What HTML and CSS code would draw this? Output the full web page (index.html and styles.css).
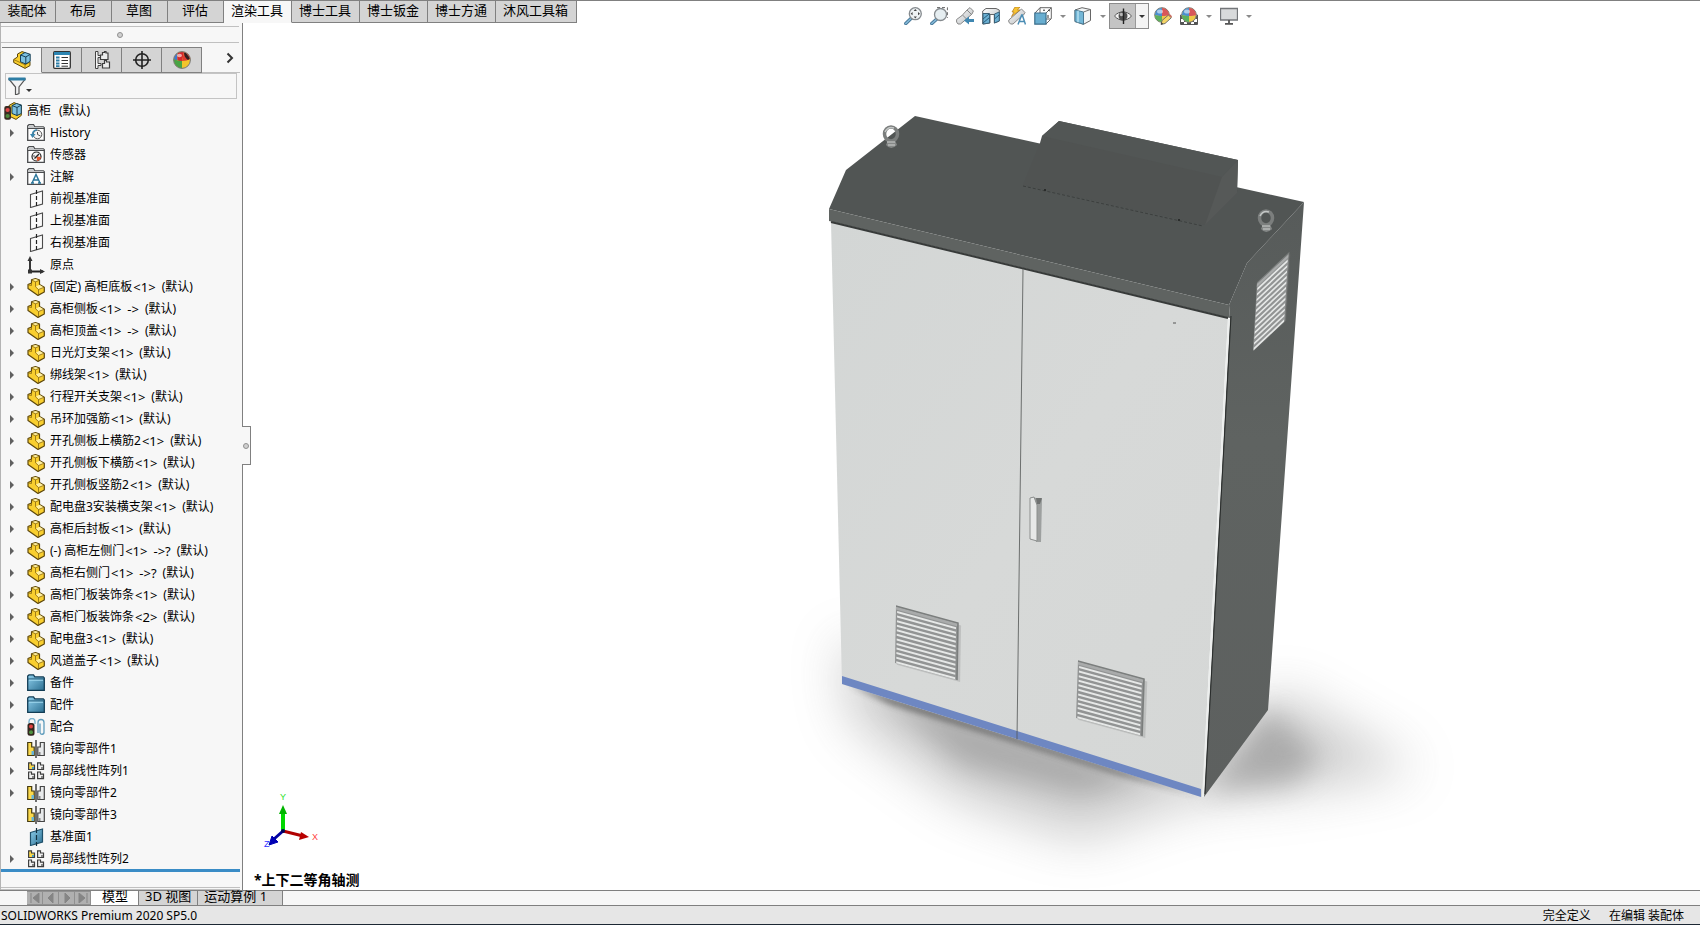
FILE: index.html
```html
<!DOCTYPE html>
<html lang="zh-CN">
  <head>
    <meta charset="UTF-8" />
    <meta name="viewport" content="width=device-width, initial-scale=1.0" />
    <title>SOLIDWORKS Premium 2020 SP5.0</title>
    <link rel="stylesheet" href="styles.css">
  </head>
  <body>
    <!-- icon set, 18 x 18 -->
    <svg class="sprite" aria-hidden="true">
      <defs>
        <linearGradient id="g-blue" x1="0" y1="0" x2="1" y2="1">
          <stop offset="0" stop-color="#8fd0ee" />
          <stop offset="1" stop-color="#2b6e90" />
        </linearGradient>
        <linearGradient id="g-grey" x1="0" y1="0" x2="1" y2="1">
          <stop offset="0" stop-color="#ffffff" />
          <stop offset="1" stop-color="#b4b8bb" />
        </linearGradient>
      </defs>

      <symbol id="i-part" viewBox="0 0 18 18">
        <path d="M1 6.500 4.500 5V1.800L8.500.6l4 1.400v4.500l4.800 2.800V14L11 17.400 1 10.500z" fill="#f9cf2f" stroke="#5e480c" stroke-width="1.200" stroke-linejoin="round" />
        <path d="M5 2 8.500 1l3.500 1.200L8.500 3.500zM9 8.500l3.500-1.700 4.300 2.600L11.500 11.500z" fill="#fff0a0" />
        <path d="M4.500 2 8.500 3.800v5L11.500 11.500V17M8.500 3.800l4-1.600M4.500 5v2.500L1.500 7M11.500 11.500l5.500-2.200" fill="none" stroke="#8a6a10" stroke-width=".8" />
      </symbol>
      <symbol id="i-asm" viewBox="0 0 18 18">
        <path d="M.7 8.500 4.500 6V3L9 .6l3 1v6l5 3v4L12 17.400.7 11.500z" fill="#f9cf2f" stroke="#5a4609" stroke-linejoin="round" />
        <path d="M.7 8.500 12 13.800 17 11M12 13.800V17" fill="none" stroke="#a07c12" />
        <path d="M7.500 4 12 1.500l5.200 1.800v7L12.800 13l-5.300-2.200z" fill="#7cc0e0" stroke="#173f55" />
        <path d="M7.500 4 12.800 6 17.200 3.300M12.800 6v7" fill="none" stroke="#173f55" />
      </symbol>
      <symbol id="i-root" viewBox="0 0 18 18">
        <path d="M5 3.500 10 .6l7.300 3v9.800L12 17.400 5 14z" fill="#f9cf2f" stroke="#5a4609" />
        <path d="M8 3.500 12.500 1.500 17.300 3v8.500L13 13.500 8 11.500z" fill="#7cc0e0" stroke="#173f55" />
        <path d="M8 3.500 13 5.500 17.300 3M13 5.500v8" fill="none" stroke="#173f55" />
        <rect x=".3" y="4" width="6.700" height="13.800" rx="2" fill="#3a2b22" />
        <circle cx="3.600" cy="8" r="2.100" fill="#e04848" /><circle cx="3.600" cy="14" r="2.100" fill="#4c8a3c" />
      </symbol>
      <symbol id="i-fold" viewBox="0 0 18 18">
        <path d="M.7 16.300V1.700L2 .7h4.500l1.300 2.100h8.500l1 1v12.500z" fill="#fff" stroke="#4a4c4e" stroke-width="1.300" />
        <path d="M1.500 4.500h15V3.200H7.500L6.300 1.500H2z" fill="#c6c8ca" />
        <path d="M.7 4.500h16.600" stroke="#4a4c4e" />
      </symbol>
      <symbol id="i-history" viewBox="0 0 18 18">
        <use href="#i-fold" />
        <circle cx="10.500" cy="10.500" r="4.300" fill="#f4f4f4" stroke="#555" />
        <path d="M10.500 8v2.500l3 1.500" fill="none" stroke="#555" />
        <path d="M3 10h5.500L5.500 14z" fill="#3b87ad" />
        <path d="M5.500 10c.5-2.500 2-4 4.500-4" fill="none" stroke="#3b87ad" stroke-width="1.600" />
      </symbol>
      <symbol id="i-sensor" viewBox="0 0 18 18">
        <use href="#i-fold" />
        <circle cx="9.500" cy="10.500" r="4.500" fill="#f4f4f4" stroke="#222" stroke-width="1.200" />
        <path d="M9.500 10.500 14 11a4.500 4.500 0 0 1-4 4z" fill="#e4572c" />
        <path d="m7.500 12.500 4.500-4.500M6.500 10h1" stroke="#222" stroke-width="1.400" />
      </symbol>
      <symbol id="i-note" viewBox="0 0 18 18">
        <use href="#i-fold" />
        <path d="M5 15 9 6.500 13 15M6.500 12h5M4 15h3M11 15h3" fill="none" stroke="#2b769b" stroke-width="1.500" />
      </symbol>
      <symbol id="i-plane" viewBox="0 0 18 18">
        <path d="m3.500 4.500 12-3.500v13l-12 3.500z" fill="#fafafa" stroke="#4a4a4a" stroke-width="1.100" />
        <path d="M9.500 0v18" stroke="#222" stroke-width="1.200" stroke-dasharray="4 2" />
      </symbol>
      <symbol id="i-planeblue" viewBox="0 0 18 18">
        <path d="m3.500 4.500 12-3.500v13l-12 3.500z" fill="url(#g-blue)" stroke="#1f506a" stroke-width="1.200" />
        <path d="M9.500 0v18" stroke="#12303f" stroke-width="1.200" stroke-dasharray="5 2" />
      </symbol>
      <symbol id="i-origin" viewBox="0 0 18 18">
        <path d="M3 3v12.500h13" fill="none" stroke="#222" stroke-width="1.800" />
        <path d="M3 0 .5 5h5zM18 15.500 13 13v5zM1 13.500h4v4H1z" fill="#333" />
      </symbol>
      <symbol id="i-folder" viewBox="0 0 18 18">
        <path d="M.7 16.300V2L2 .9h4.500l1.300 2h8.500l1 1v12.400z" fill="url(#g-blue)" stroke="#123c54" stroke-width="1.300" />
        <path d="M1 5h16" stroke="#1d536f" />
        <path d="M2 6.200h14" stroke="#a5dcf2" />
      </symbol>
      <symbol id="i-mates" viewBox="0 0 18 18">
        <path d="M2 5V3.500a3 3 0 0 1 6 0V6" fill="none" stroke="#7fb4cf" stroke-width="1.400" />
        <rect x=".5" y="5" width="7" height="12.800" rx="2.500" fill="#33261f" />
        <circle cx="4" cy="8.500" r="2" fill="#e04040" /><circle cx="4" cy="14.200" r="2" fill="#4f9340" />
        <path d="M11 15V4.500a3 3 0 0 1 6 0V14a2 2 0 0 1-4 .5V5.500" fill="none" stroke="#5f9cbc" stroke-width="1.300" />
      </symbol>
      <symbol id="i-mirror" viewBox="0 0 18 18">
        <path d="M.7 15.500V2.500h4v4.500h2.500v8.500z" fill="#fbd94c" stroke="#443a10" stroke-width="1.200" />
        <path d="M4.500 15v-4H7v4z" fill="#67b4d8" />
        <path d="M17.300 15.500V2.500h-4v4.500h-2.500v8.500z" fill="#e8eaeb" stroke="#444" stroke-width="1.200" />
        <path d="M11.500 15v-3h2v3z" fill="#888" />
        <path d="M9 0v18" stroke="#111" stroke-width="1.200" />
      </symbol>
      <symbol id="i-pattern" viewBox="0 0 18 18">
        <g stroke="#3e3e3e" fill="#f0f0f0" stroke-width="1.200">
          <path d="M1.600 7.500V.8h2.900V3h3v4.500z" fill="#fbd94c" />
          <path d="M10.600 7.500V.8h2.900V3h3v4.500zM1.600 16.700V10h2.900v2.200h3v4.500zM10.600 16.700V10h2.900v2.200h3v4.500z" />
        </g>
        <path d="M5 7V5h2v2z" fill="#4b9dc4" />
        <path d="M14 7V5h2v2zM5 16v-2h2v2zM14 16v-2h2v2z" fill="#888" />
      </symbol>
      <symbol id="i-props" viewBox="0 0 18 18">
        <rect x=".7" y=".7" width="16.600" height="16.600" rx="1" fill="#fff" stroke="#333" stroke-width="1.300" />
        <path d="M1 1h16v3H1z" fill="#2c85b2" />
        <path d="M8.500 6.500H15M8.500 9.500H15M8.500 12.500H15M8.500 15.200H15" stroke="#333" />
        <path d="M3 6.500h3.500M3 9.500h3.500M3 12.500h3.500M3 15.200h3.500" stroke="#2c7ea8" stroke-width="1.800" />
      </symbol>
      <symbol id="i-config" viewBox="0 0 18 18">
        <path d="M2.500.500h2.500v4h3v2H5v6h3v2H5v3H2.500z" fill="#f4f4f4" stroke="#444" />
        <path d="M7.500 8.500V4h2V1.500h2V.700h1.500v1.300H15v6.500zM9.500 17V12.500h2V9.500h2v1.500h3v6z" fill="#eceded" stroke="#3e3e3e" stroke-width="1.200" />
      </symbol>
      <symbol id="i-target" viewBox="0 0 18 18">
        <circle cx="9" cy="9" r="6.300" fill="none" stroke="#222" stroke-width="1.600" />
        <path d="M9 0v18M0 9h18" stroke="#222" stroke-width="1.600" />
      </symbol>
      <symbol id="i-ball" viewBox="0 0 18 18">
        <circle cx="9" cy="9" r="8.400" fill="#f2c52c" />
        <path d="M.8 8a8.300 8.300 0 0 1 4-6Q4 5 4.500 9.500 2 9 .8 8z" fill="#3f79d0" />
        <path d="M4.800 2A8.300 8.300 0 0 1 11 .9L9 10q-2.500 0-4.500-.5Q4 5 4.800 2z" fill="#d7292c" />
        <path d="M11 .9A8.300 8.300 0 0 1 17.300 8Q14 10 9 10z" fill="#df3d30" />
        <path d="M.8 8Q4 10 9 10v7.300A8.300 8.300 0 0 1 .8 8z" fill="#49a344" />
        <path d="M11 1.500 13 2l4 5.500-2 1.500q-4-3-4-7.500z" fill="#33201f" />
        <ellipse cx="6.500" cy="4.500" rx="2.500" ry="1.800" fill="#fff" opacity=".6" />
        <circle cx="9" cy="9" r="8.400" fill="none" stroke="#777" />
      </symbol>
      <symbol id="i-sphere" viewBox="0 0 18 18">
        <circle cx="8" cy="8" r="7.300" fill="#eec848" stroke="#777" />
        <path d="M.9 8A7 7 0 0 1 8 .9V9C5 9 3 8.800.9 8z" fill="#4a8fd0" />
        <path d="M8 .9A7 7 0 0 1 15.100 8C13 8.800 11 9 8 9z" fill="#d8575a" />
        <path d="M.9 8C3 8.800 5 9 8 9v6.100A7 7 0 0 1 .9 8z" fill="#5ab060" />
        <ellipse cx="6" cy="4.500" rx="3" ry="2" fill="#fff" opacity=".55" />
      </symbol>
      <symbol id="i-appear" viewBox="0 0 18 18">
        <use href="#i-sphere" />
        <path d="m7 17.500 1-4L14.500 8l2.800 2.800L11 16.500z" fill="#f6d566" stroke="#666" stroke-width=".9" />
        <path d="m14.500 8 2.800 2.800 .7-1.600-2-2z" fill="#c96a5d" />
        <path d="m7 17.500 .6-2.200 1.600 1.600z" fill="#333" />
      </symbol>
      <symbol id="i-scene" viewBox="0 0 18 18">
        <path d="M.5 8h17v9.500H.5z" fill="#fff" stroke="#555" />
        <path d="M1 9h3v3H1zM14 9h3v3h-3zM1 15h3v2.500H1zM7 15h4v2.500H7zM14 15h3v2.500h-3zM4 12h3v3H4zM11 12h3v3h-3z" fill="#555" />
        <g transform="translate(1 0)"><use href="#i-sphere" width="18" height="18" /></g>
      </symbol>
      <symbol id="i-fit" viewBox="0 0 18 18">
        <path d="m1.800 16.500 5.700-5.500" stroke="#49799a" stroke-width="3.400" stroke-linecap="round" />
        <path d="m1.800 16.500 5.700-5.500" stroke="#83b9d8" stroke-width="1.600" stroke-linecap="round" />
        <circle cx="11.300" cy="6.700" r="6" fill="#eef2f4" stroke="#858a8e" stroke-width="1.300" />
        <path d="m11.300 2 1.600 2h-3.200zm0 9.400 1.600-2h-3.200zM6.600 6.700l2-1.600v3.200zm9.400 0-2-1.600v3.200z" fill="#444" />
      </symbol>
      <symbol id="i-area" viewBox="0 0 18 18">
        <path d="M7 .6h10.400V11" fill="none" stroke="#666" stroke-dasharray="3 2" />
        <path d="m1.800 16.500 5-4.500" stroke="#49799a" stroke-width="3.400" stroke-linecap="round" />
        <path d="m1.800 16.500 5-4.500" stroke="#83b9d8" stroke-width="1.600" stroke-linecap="round" />
        <circle cx="10.500" cy="7.500" r="6" fill="#e6eef1" stroke="#858a8e" stroke-width="1.300" />
      </symbol>
      <symbol id="i-prev" viewBox="0 0 18 18">
        <path d="M14 .6 17.400 4 16 7l-5.500 5-6 5H2l-1.400-2V12.500L6 8.500l5-5.500z" fill="url(#g-grey)" stroke="#888" />
        <path d="m11 3 4.500 4.500M6.500 8l4 4" stroke="#888" />
        <path d="m8 13.500 5-4V12h5v3h-5v2.500z" fill="#3f87b1" />
      </symbol>
      <symbol id="i-section" viewBox="0 0 18 18">
        <path d="M.7 4 4 1.500h10L17.300 3v11l-5 2V7.500H8V16l-7.300 1z" fill="url(#g-grey)" stroke="#666" />
        <path d="M1 6.500h6.500V16L1 17zM12.500 7l4.800-2v9l-4.800 2z" fill="#6bb0d3" stroke="#3a6178" />
        <path d="m1 12 6-5M1 16l6.500-5.500M12.500 12 17 8" stroke="#275b79" />
      </symbol>
      <symbol id="i-dynview" viewBox="0 0 18 18">
        <path d="M13.500 2 17 5.500 15.500 8l-5 4-5.500 5H2.500L.8 15v-2L6 8.500z" fill="url(#g-grey)" stroke="#888" />
        <path d="M7 0h5L9.500 3H12L3.500 9.500 6 5H4z" fill="#f7c331" stroke="#b2791b" stroke-width=".7" />
        <path d="M10 17.500 13.700 8h.6l3.200 9.500M11.500 14.500h5" fill="none" stroke="#4b8db4" stroke-width="1.500" />
      </symbol>
      <symbol id="i-orient" viewBox="0 0 18 18">
        <path d="M1 6 6 .7h11.300v11L12 17M12 6l5.300-5.300M6 .7V12l-5 5M6 12h11" fill="none" stroke="#666" />
        <path d="M.8 6H12v11.200H.8z" fill="#69aed0" stroke="#3d6f8b" stroke-width="1.200" />
        <path d="m14 3 2 1M9 3.200h2M14 8v3" stroke="#333" />
      </symbol>
      <symbol id="i-style" viewBox="0 0 18 18">
        <path d="M1 3 8 .7 16.500 2.500v11L9.500 17.300 1 14.500z" fill="#f2f5f6" stroke="#666" />
        <path d="M1 3 9.500 5v12.300L1 14.500z" fill="#72b6d6" stroke="#4a7a94" />
        <path d="M9.500 5 16.500 2.500" stroke="#777" /><path d="M4 3.800v11.500" stroke="#b4dff0" stroke-width="1.500" />
      </symbol>
      <symbol id="i-eye" viewBox="0 0 18 18">
        <path d="M.5 9C5 3.500 13 3.500 17.500 9 13 14.500 5 14.500.5 9z" fill="#f2f2f2" stroke="#555" />
        <circle cx="9" cy="9" r="4.500" fill="#505050" /><circle cx="7.500" cy="7.500" r="1.800" fill="#b8b8b8" />
        <path d="M9.500 1.500v15.500" stroke="#222" stroke-width="1.400" />
      </symbol>
      <symbol id="i-screen" viewBox="0 0 18 18">
        <path d="M.5 1.500h17v11.500H.5z" fill="#d8dadb" stroke="#737679" stroke-width="1.300" />
        <path d="M9 13v3.500M5 16.800h8" stroke="#555" stroke-width="1.800" />
      </symbol>
      <symbol id="i-filter" viewBox="0 0 18 18">
        <path d="M.8 2h16.400L11 10v6.500L7.500 18v-8z" fill="#f2f3f4" stroke="#555" stroke-width="1.200" />
        <path d="M.5.500h17v3H.5z" fill="#2d7da5" />
      </symbol>
    </svg>

    <header class="commands">
      <button class="command">装配体</button>
      <button class="command">布局</button>
      <button class="command">草图</button>
      <button class="command">评估</button>
      <button class="command active">渲染工具</button>
      <button class="command">博士工具</button>
      <button class="command">博士钣金</button>
      <button class="command">博士方通</button>
      <button class="command">沐风工具箱</button>
    </header>

    <main class="workspace">
      <aside class="panel">
        <div class="grip"><i class="dot"></i></div>
        <nav class="managers">
          <button class="manager active" aria-label="FeatureManager"><svg class="icon"><use href="#i-asm" /></svg></button>
          <button class="manager" aria-label="PropertyManager"><svg class="icon"><use href="#i-props" /></svg></button>
          <button class="manager" aria-label="ConfigurationManager"><svg class="icon"><use href="#i-config" /></svg></button>
          <button class="manager" aria-label="DimXpertManager"><svg class="icon"><use href="#i-target" /></svg></button>
          <button class="manager" aria-label="DisplayManager"><svg class="icon"><use href="#i-ball" /></svg></button>
          <button class="more" aria-label="More"><svg width="8" height="12" viewBox="0 0 8 12"><path d="m1.500 1.500 4.500 4.500-4.500 4.500" fill="none" stroke="#333" stroke-width="2" /></svg></button>
        </nav>
        <div class="filter">
          <button class="filter-btn" aria-label="Filter"><svg class="icon"><use href="#i-filter" /></svg><i class="caret dark"></i></button>
          <input type="text" aria-label="Filter text" />
        </div>

        <ul class="tree">
          <li class="root"><svg class="icon"><use href="#i-root" /></svg>高柜<span class="cfg">(默认)</span></li>
          <li><button class="toggle" aria-label="Expand"></button><svg class="icon"><use href="#i-history" /></svg>History</li>
          <li class="leaf"><svg class="icon"><use href="#i-sensor" /></svg>传感器</li>
          <li><button class="toggle" aria-label="Expand"></button><svg class="icon"><use href="#i-note" /></svg>注解</li>
          <li class="leaf"><svg class="icon"><use href="#i-plane" /></svg>前视基准面</li>
          <li class="leaf"><svg class="icon"><use href="#i-plane" /></svg>上视基准面</li>
          <li class="leaf"><svg class="icon"><use href="#i-plane" /></svg>右视基准面</li>
          <li class="leaf"><svg class="icon"><use href="#i-origin" /></svg>原点</li>
          <li><button class="toggle" aria-label="Expand"></button><svg class="icon"><use href="#i-part" /></svg>(固定) 高柜底板<span class="ref">&lt;1&gt;</span>(默认)</li>
          <li><button class="toggle" aria-label="Expand"></button><svg class="icon"><use href="#i-part" /></svg>高柜侧板<span class="ref">&lt;1&gt;</span><span class="ref">-&gt;</span>(默认)</li>
          <li><button class="toggle" aria-label="Expand"></button><svg class="icon"><use href="#i-part" /></svg>高柜顶盖<span class="ref">&lt;1&gt;</span><span class="ref">-&gt;</span>(默认)</li>
          <li><button class="toggle" aria-label="Expand"></button><svg class="icon"><use href="#i-part" /></svg>日光灯支架<span class="ref">&lt;1&gt;</span>(默认)</li>
          <li><button class="toggle" aria-label="Expand"></button><svg class="icon"><use href="#i-part" /></svg>绑线架<span class="ref">&lt;1&gt;</span>(默认)</li>
          <li><button class="toggle" aria-label="Expand"></button><svg class="icon"><use href="#i-part" /></svg>行程开关支架<span class="ref">&lt;1&gt;</span>(默认)</li>
          <li><button class="toggle" aria-label="Expand"></button><svg class="icon"><use href="#i-part" /></svg>吊环加强筋<span class="ref">&lt;1&gt;</span>(默认)</li>
          <li><button class="toggle" aria-label="Expand"></button><svg class="icon"><use href="#i-part" /></svg>开孔侧板上横筋2<span class="ref">&lt;1&gt;</span>(默认)</li>
          <li><button class="toggle" aria-label="Expand"></button><svg class="icon"><use href="#i-part" /></svg>开孔侧板下横筋<span class="ref">&lt;1&gt;</span>(默认)</li>
          <li><button class="toggle" aria-label="Expand"></button><svg class="icon"><use href="#i-part" /></svg>开孔侧板竖筋2<span class="ref">&lt;1&gt;</span>(默认)</li>
          <li><button class="toggle" aria-label="Expand"></button><svg class="icon"><use href="#i-part" /></svg>配电盘3安装横支架<span class="ref">&lt;1&gt;</span>(默认)</li>
          <li><button class="toggle" aria-label="Expand"></button><svg class="icon"><use href="#i-part" /></svg>高柜后封板<span class="ref">&lt;1&gt;</span>(默认)</li>
          <li><button class="toggle" aria-label="Expand"></button><svg class="icon"><use href="#i-part" /></svg>(-) 高柜左侧门<span class="ref">&lt;1&gt;</span><span class="ref">-&gt;?</span>(默认)</li>
          <li><button class="toggle" aria-label="Expand"></button><svg class="icon"><use href="#i-part" /></svg>高柜右侧门<span class="ref">&lt;1&gt;</span><span class="ref">-&gt;?</span>(默认)</li>
          <li><button class="toggle" aria-label="Expand"></button><svg class="icon"><use href="#i-part" /></svg>高柜门板装饰条<span class="ref">&lt;1&gt;</span>(默认)</li>
          <li><button class="toggle" aria-label="Expand"></button><svg class="icon"><use href="#i-part" /></svg>高柜门板装饰条<span class="ref">&lt;2&gt;</span>(默认)</li>
          <li><button class="toggle" aria-label="Expand"></button><svg class="icon"><use href="#i-part" /></svg>配电盘3<span class="ref">&lt;1&gt;</span>(默认)</li>
          <li><button class="toggle" aria-label="Expand"></button><svg class="icon"><use href="#i-part" /></svg>风道盖子<span class="ref">&lt;1&gt;</span>(默认)</li>
          <li><button class="toggle" aria-label="Expand"></button><svg class="icon"><use href="#i-folder" /></svg>备件</li>
          <li><button class="toggle" aria-label="Expand"></button><svg class="icon"><use href="#i-folder" /></svg>配件</li>
          <li><button class="toggle" aria-label="Expand"></button><svg class="icon"><use href="#i-mates" /></svg>配合</li>
          <li><button class="toggle" aria-label="Expand"></button><svg class="icon"><use href="#i-mirror" /></svg>镜向零部件1</li>
          <li><button class="toggle" aria-label="Expand"></button><svg class="icon"><use href="#i-pattern" /></svg>局部线性阵列1</li>
          <li><button class="toggle" aria-label="Expand"></button><svg class="icon"><use href="#i-mirror" /></svg>镜向零部件2</li>
          <li class="leaf"><svg class="icon"><use href="#i-mirror" /></svg>镜向零部件3</li>
          <li class="leaf"><svg class="icon"><use href="#i-planeblue" /></svg>基准面1</li>
          <li><button class="toggle" aria-label="Expand"></button><svg class="icon"><use href="#i-pattern" /></svg>局部线性阵列2</li>
        </ul>
        <div class="rollback"></div>
        <div class="panel-foot"></div>
        <button class="collapse" aria-label="Collapse"><i class="dot"></i></button>
      </aside>

      <section class="viewport">
        <svg class="model" viewBox="243 23 1457 867">
          <defs>
            <filter id="blur-s" x="-30%" y="-30%" width="160%" height="160%"><feGaussianBlur stdDeviation="3" /></filter>
            <filter id="blur-m" x="-40%" y="-40%" width="180%" height="180%"><feGaussianBlur stdDeviation="14" /></filter>
            <filter id="blur-l" x="-40%" y="-60%" width="180%" height="220%"><feGaussianBlur stdDeviation="26" /></filter>
            <linearGradient id="g-side" x1="0" y1="0" x2="0" y2="1">
              <stop offset="0" stop-color="#575b5a" />
              <stop offset=".4" stop-color="#5f6361" />
              <stop offset="1" stop-color="#5d605f" />
            </linearGradient>
            <linearGradient id="g-door" x1="0" y1="0" x2="1" y2="1">
              <stop offset="0" stop-color="#d3d6d5" />
              <stop offset=".5" stop-color="#d7d9d8" />
              <stop offset="1" stop-color="#d5d7d6" />
            </linearGradient>
            <g id="vent">
              <path d="M3 3H105V102H3z" fill="#777" opacity=".25" />
              <path d="M0 0H100V100H0z" fill="#929494" />
              <path d="M0 1H100V6H0z" fill="#a9abab" />
              <path d="M2 10H97M2 18H97M2 26H97M2 34H97M2 42H97M2 50H97M2 58H97M2 66H97M2 74H97M2 82H97M2 90H97M2 98H97" stroke="#e6e8e7" stroke-width="3.500" />
              <path d="M0 0H100V100" fill="none" stroke="#7b7e7d" stroke-width="2.500" />
            </g>
            <g id="eyebolt">
              <path d="M-5 11q5 6 11 0l-2-5h-7z" fill="#858887" />
              <ellipse cx="0" cy="0" rx="6.500" ry="7" fill="none" stroke="#7b7e7d" stroke-width="3.500" />
              <path d="M-6-2q3-6 9-4" fill="none" stroke="#c4c7c6" stroke-width="1.500" />
              <path d="M-4 8H4M-3 11H4" stroke="#d0d2d1" />
            </g>
          </defs>

          <!-- floor shadow -->
          <path d="M840 640 1200 760 1280 690 1420 770 1300 790 1195 800 1080 840 960 800 850 720z" fill="#777" opacity=".36" filter="url(#blur-l)" />
          <path d="M1206 792 1268 705 1320 760 1290 785z" fill="#777" opacity=".42" filter="url(#blur-m)" />
          <path d="M880 690 1150 775 1080 795 960 765z" fill="#777" opacity=".4" filter="url(#blur-m)" />
          <path d="M848 684 1199 796 1120 775 890 704z" fill="#444" opacity=".7" filter="url(#blur-s)" />

          <!-- side -->
          <path d="M1304 202 1268 710 1204 797 1230 318 1229 305 1247 263z" fill="url(#g-side)" />
          <!-- roof -->
          <path d="M915 116 1304 202 1247 263 1229 305 829 209 846 170z" fill="#515554" />
          <path d="M829 209 1229 305 1230 318 829 221z" fill="#5f6361" />
          <!-- air duct cover -->
          <path d="M1040 143 1042 136 1059 121 1238 160 1237 193 1205 225 1023 185z" fill="#505352" />
          <path d="M1042 136 1059 121 1238 160 1222 177z" fill="#525655" />
          <path d="M1222 177 1238 160 1237 193 1205 225z" fill="#565958" />
          <path d="M1023 186 1203 226" stroke="#3c3f3e" stroke-dasharray="3 2" />
          <path d="M1045 189v2M1179 219v2" stroke="#2a2c2b" stroke-width="2" />

          <!-- doors -->
          <path d="M831 222 1228 318 1202 797 842 684z" fill="url(#g-door)" />
          <path d="M831 222 1228 318" stroke="#373a39" stroke-width="2" />
          <path d="M1229 319 1203 797" stroke="#eceeed" stroke-width="2" />
          <path d="M1231 316 1205 794" stroke="#292c2b" />
          <path d="M1023 269 1017 739" stroke="#6c6f6e" />
          <path d="M842 676 1017 731 1201 789 1201 797 1017 739 842 684z" fill="#6e87c2" />
          <path d="M1017 731v8" stroke="#59606f" />
          <path d="M1173 323h3" stroke="#555" />

          <!-- handle -->
          <path d="M1031 497 1042 499 1041 542 1036 542z" fill="#9da09f" />
          <path d="M1030 498 1034 497 1037 505 1037 541 1030 539z" fill="#e7e9e8" stroke="#8c8f8e" />
          <path d="M1036 498h6l-2 6h-3z" fill="#6f7271" />

          <use href="#vent" transform="matrix(.62 .17 -.01 .57 896 606)" />
          <use href="#vent" transform="matrix(.66 .18 -.02 .57 1078 661)" />
          <use href="#vent" transform="matrix(.32 -.3 -.04 .68 1257 283)" />
          <use href="#eyebolt" transform="translate(891 134)" />
          <use href="#eyebolt" transform="translate(1266 218)" />
        </svg>

        <div class="headsup">
          <button aria-label="Zoom to Fit"><svg class="icon"><use href="#i-fit" /></svg></button>
          <button aria-label="Zoom to Area"><svg class="icon"><use href="#i-area" /></svg></button>
          <button aria-label="Previous View"><svg class="icon"><use href="#i-prev" /></svg></button>
          <button aria-label="Section View"><svg class="icon"><use href="#i-section" /></svg></button>
          <button aria-label="Dynamic Annotation Views"><svg class="icon"><use href="#i-dynview" /></svg></button>
          <button aria-label="View Orientation"><svg class="icon"><use href="#i-orient" /></svg></button>
          <button class="drop" aria-label="Orientation menu"><i class="caret"></i></button>
          <button aria-label="Display Style"><svg class="icon"><use href="#i-style" /></svg></button>
          <button class="drop" aria-label="Style menu"><i class="caret"></i></button>
          <div class="pressed">
            <button aria-label="Hide/Show Items"><svg class="icon"><use href="#i-eye" /></svg></button>
            <button class="drop" aria-label="Hide/Show menu"><i class="caret dark"></i></button>
          </div>
          <button aria-label="Edit Appearance"><svg class="icon"><use href="#i-appear" /></svg></button>
          <button aria-label="Apply Scene"><svg class="icon"><use href="#i-scene" /></svg></button>
          <button class="drop" aria-label="Scene menu"><i class="caret"></i></button>
          <button aria-label="View Settings"><svg class="icon"><use href="#i-screen" /></svg></button>
          <button class="drop" aria-label="Settings menu"><i class="caret"></i></button>
        </div>

        <div class="orientation">
          <svg class="triad" width="64" height="60" viewBox="0 0 64 60">
            <path d="m22 39-9 8" stroke="#0000a0" stroke-width="3" />
            <path d="m8 53 3-9 6 6z" fill="#0000b4" stroke="#0000b4" />
            <path d="m22 39 20 5" stroke="#b00000" stroke-width="3" />
            <path d="m48 45-8-5-2 8z" fill="#b80000" />
            <path d="M22 39V20" stroke="#00d800" stroke-width="4" />
            <path d="m22 13 4 9h-8z" fill="#00b400" />
            <circle cx="22" cy="39" r="2" fill="#00005a" />
            <text x="19" y="8" fill="#2be22b">Y</text>
            <text x="51" y="48" fill="#ff4040">X</text>
            <text x="3" y="55" fill="#3030ff">Z</text>
          </svg>
          <p>*上下二等角轴测</p>
        </div>
      </section>
    </main>

    <nav class="sheets">
      <div class="pager">
        <button aria-label="First"><svg width="10" height="10"><path d="M1 0v10M9 0 3 5l6 5z" /></svg></button>
        <button aria-label="Previous"><svg width="10" height="10"><path d="M7 0 2 5l5 5z" /></svg></button>
        <button aria-label="Next"><svg width="10" height="10"><path d="m3 0 5 5-5 5z" /></svg></button>
        <button aria-label="Last"><svg width="10" height="10"><path d="M9 0v10M1 0l6 5-6 5z" /></svg></button>
      </div>
      <button class="sheet active">模型</button>
      <button class="sheet">3D 视图</button>
      <button class="sheet wide">运动算例 1</button>
    </nav>

    <footer class="status">
      <span class="product">SOLIDWORKS Premium 2020 SP5.0</span>
      <span>完全定义</span>
      <span>在编辑 装配体</span>
    </footer>
  </body>
</html>
```

FILE: styles.css
```css
* {
  padding: 0;
  margin: 0;
  box-sizing: border-box;
}

body {
  --line: #808080;
  --panel: #f7f7f7;
  --tab: #d4d4d4;

  height: 100vh;
  display: flex;
  flex-direction: column;
  overflow: hidden;
  background-color: #fff;
  color: #000;
  font-family: "Noto Sans", "Noto Sans CJK SC", sans-serif;
  font-size: 12px;
}

button {
  border: 0;
  background: none;
  font: inherit;
  color: inherit;
}

.sprite {
  position: absolute;
  width: 0;
  height: 0;
}

.icon {
  width: 18px;
  height: 18px;
  flex: none;
  display: block;
}

.caret {
  display: block;
  border: 3px solid transparent;
  border-top-color: #8a8a8a;
  border-bottom: 0;
}

.caret.dark {
  border-top-color: #333;
}

.dot {
  display: block;
  width: 6px;
  height: 6px;
  border: 1px solid #909090;
  border-radius: 50%;
  background-color: #d0d0d0;
}

/* command tabs */
.commands {
  flex: none;
  display: flex;
  height: 23px;
  border-top: 1px solid var(--line);
}

.command {
  min-width: 56px;
  padding: 0 8px 2px 7px;
  border-right: 1px solid var(--line);
  border-bottom: 1px solid var(--line);
  background-color: var(--tab);
  font-size: 13px;
  line-height: 19px;
}

.command.active {
  border-bottom-color: var(--panel);
  background-color: var(--panel);
}

/* workspace */
.workspace {
  flex: 1;
  min-height: 0;
  display: flex;
}

.panel {
  position: relative;
  flex: none;
  width: 243px;
  display: flex;
  flex-direction: column;
  border-left: 1px solid #b4b4b4;
  border-right: 1px solid var(--line);
  background-color: var(--panel);
}

.grip {
  height: 17px;
  margin: 3px 3px 4px 0;
  display: flex;
  align-items: center;
  justify-content: center;
  border-top: 1px solid #c0c0c0;
  border-bottom: 1px solid #c0c0c0;
}

.managers {
  display: flex;
  height: 26px;
  margin: 0 2px 0 1px;
  border-bottom: 1px solid #c0c0c0;
}

.manager {
  width: 40px;
  height: 26px;
  display: flex;
  align-items: center;
  justify-content: center;
  border: 1px solid var(--line);
  border-left: 0;
  background-color: var(--tab);
}

.manager.active {
  border-bottom-color: var(--panel);
  background-color: var(--panel);
}

.more {
  margin-left: auto;
  padding: 0 6px;
}

.filter {
  height: 26px;
  margin: 0 5px 0 4px;
  display: flex;
  align-items: center;
  border: 1px solid #c4c4c4;
}

.filter-btn {
  display: flex;
  align-items: center;
  padding-left: 2px;
}

.filter-btn .caret {
  margin-top: 8px;
}

.filter input {
  flex: 1;
  min-width: 0;
  border: 0;
  outline: 0;
  background: none;
}

.tree {
  padding-top: 1px;
  list-style: none;
}

.tree li {
  display: flex;
  align-items: center;
  height: 22px;
  line-height: 22px;
  white-space: pre;
}

.tree .icon {
  margin-right: 5px;
}

.tree .leaf {
  padding-left: 26px;
}

.tree .root {
  padding-left: 3px;
}

.cfg {
  margin-left: 8px;
}

.toggle {
  width: 22px;
  height: 22px;
  margin-right: 4px;
  padding-left: 9px;
}

.toggle::before {
  content: "";
  display: block;
  width: 0;
  border: 4px solid transparent;
  border-left: 4px solid #606060;
  border-right: 0;
}

/* instance number and external reference marks */
.ref {
  margin: 0 6px 0 1px;
  font-size: 13px;
}

.ref + .ref {
  margin-left: 0;
}

.rollback {
  height: 3px;
  margin-right: 2px;
  margin-top: -1px;
  background-color: #3a8cc6;
}

.panel-foot {
  height: 3px;
  margin: auto 2px 0 0;
  border-top: 1px solid #c0c0c0;
  border-bottom: 1px solid #c0c0c0;
}

.collapse {
  position: absolute;
  top: 403px;
  right: -9px;
  width: 9px;
  height: 39px;
  display: flex;
  align-items: center;
  justify-content: center;
  border: 1px solid var(--line);
  border-left: 0;
  background-color: var(--panel);
}

/* graphics area */
.viewport {
  position: relative;
  flex: 1;
  min-width: 0;
}

.model {
  display: block;
  width: 100%;
  height: 100%;
}

.headsup {
  position: absolute;
  top: -20px;
  left: 660px;
  height: 26px;
  display: flex;
  align-items: center;
  gap: 6px;
}

.headsup button {
  width: 20px;
  height: 20px;
  display: flex;
  align-items: center;
  justify-content: center;
}

.headsup .drop {
  width: 8px;
}

.headsup .pressed {
  display: flex;
  height: 26px;
  margin: 0 -2px 0 -4px;
  border: 1px solid #8c8c8c;
  background-color: #c4c4c4;
}

.headsup .pressed button {
  width: 25px;
  height: 24px;
}

.headsup .pressed .drop {
  width: 13px;
  border-left: 1px solid #999;
  background-color: #f4f4f4;
}

.orientation {
  position: absolute;
  left: 11px;
  bottom: 0;
}

.triad {
  display: block;
  margin-left: 7px;
  margin-bottom: 17px;
  font-family: "Liberation Sans", sans-serif;
  font-size: 9px;
}

.orientation p {
  font-size: 14px;
  font-weight: bold;
  line-height: 21px;
}

/* bottom tabs */
.sheets {
  flex: none;
  display: flex;
  height: 16px;
  border-top: 1px solid var(--line);
  border-bottom: 1px solid var(--line);
  background-color: var(--panel);
}

.pager {
  display: flex;
  margin-left: 27px;
  background-color: #b0b0b0;
}

.pager button {
  width: 16px;
  display: flex;
  align-items: center;
  justify-content: center;
  border: 1px solid #909090;
  border-left: 0;
}

.pager path {
  fill: #858585;
  stroke: #858585;
}

.sheet {
  padding: 0 6px 4px;
  border-right: 1px solid var(--line);
  background-color: var(--tab);
  font-size: 13px;
  line-height: 10px;
}

.sheet.active {
  padding: 0 10px 4px 11px;
  background-color: #fff;
}

.sheet.wide {
  padding-right: 15px;
}

.status {
  flex: none;
  display: flex;
  gap: 18px;
  height: 19px;
  padding-right: 16px;
  border-bottom: 1px solid #1c2733;
  background-color: #e6e6e6;
  line-height: 19px;
}

.product {
  margin-right: auto;
  padding-left: 1px;
  font-size: 12px;
}
```
